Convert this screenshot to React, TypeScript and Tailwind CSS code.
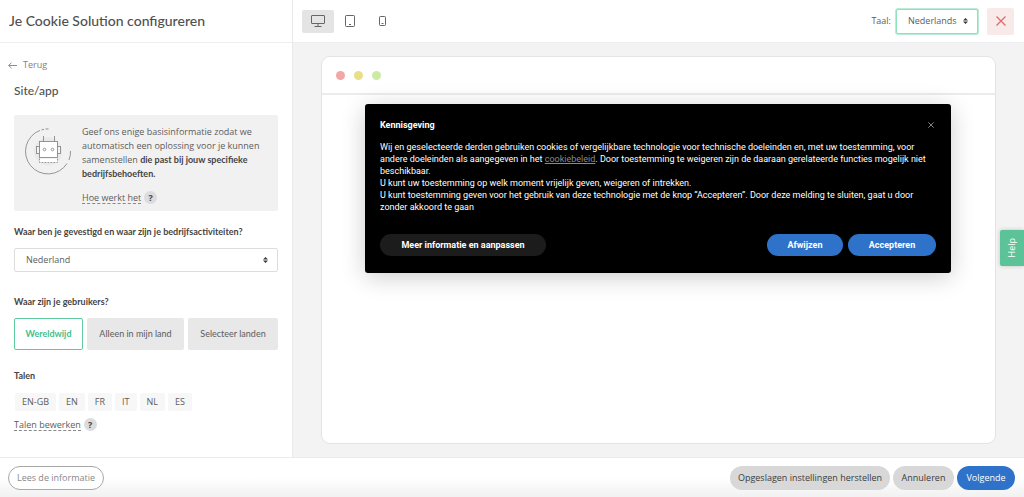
import React, { useState } from 'react';
import { clsx } from 'clsx';

const AUDIENCES = [
  { id: 'world', label: 'Wereldwijd', width: 'w-[69px]' },
  { id: 'country', label: 'Alleen in mijn land', width: 'w-[97px]' },
  { id: 'select', label: 'Selecteer landen', width: 'flex-1' },
];

const LANGUAGES = ['EN-GB', 'EN', 'FR', 'IT', 'NL', 'ES'];

const DEVICES = [
  { id: 'desktop', label: 'Desktop', icon: <DesktopIcon /> },
  { id: 'tablet', label: 'Tablet', icon: <TabletIcon /> },
  { id: 'phone', label: 'Telefoon', icon: <PhoneIcon /> },
];

function DesktopIcon() {
  return (
    <svg width="14" height="12" viewBox="0 0 14 12" fill="none" stroke="#666" strokeWidth="1">
      <rect x="0.5" y="0.5" width="13" height="8" rx="0.5" />
      <path d="M7 8.5v3M3.5 11.5h7" />
    </svg>
  );
}

function TabletIcon() {
  return (
    <svg width="10" height="12" viewBox="0 0 10 12" fill="none" stroke="#666" strokeWidth="1">
      <rect x="0.5" y="0.5" width="9" height="11" rx="0.8" />
      <path d="M4 9.5h2" />
    </svg>
  );
}

function PhoneIcon() {
  return (
    <svg width="7" height="10" viewBox="0 0 7 10" fill="none" stroke="#666" strokeWidth="1">
      <rect x="0.5" y="0.5" width="6" height="9" rx="0.8" />
      <path d="M2.5 7.5h2" />
    </svg>
  );
}

function Cross({ size, color }: { size: number; color: string }) {
  return (
    <svg width={size} height={size} viewBox="0 0 10 10" fill="none" stroke={color} strokeWidth="1.3">
      <path d="M0.5 0.5l9 9M9.5 0.5l-9 9" />
    </svg>
  );
}

function Caret() {
  return (
    <svg className="pointer-events-none absolute top-1/2 right-[10px] -translate-y-1/2" width="5" height="6" viewBox="0 0 5 6" fill="#343a40">
      <path d="M0 2.5L2.5 0L5 2.5zM0 3.5L2.5 6L5 3.5z" />
    </svg>
  );
}

function Robot() {
  return (
    <svg className="shrink-0" width="48" height="48" viewBox="0 0 48 48" fill="none" stroke="#8a8a8a" strokeWidth="0.9">
      <circle cx="24" cy="23.500" r="14" fill="#e9e9e9" stroke="none" />
      <path d="M16 2.400A22.500 22.500 0 1 0 43 35.500M45 32A22.500 22.500 0 0 0 46.500 23M17.500 1.900l2.500-.6M21.500 1l3-.1" />
      <path d="M19.500 13.500V8M30.500 13.500V8" />
      <rect x="12.500" y="18.500" width="3" height="7" fill="#f4f4f4" />
      <rect x="33.500" y="18.500" width="3" height="7" fill="#f4f4f4" />
      <rect x="15.500" y="13.500" width="18" height="16" fill="#fff" />
      <circle cx="20.500" cy="21.500" r="1.300" />
      <circle cx="28.500" cy="21.500" r="1.300" />
      <path d="M15.500 30.500v4h18v-4" fill="#fff" strokeDasharray="1.800 1.200" />
    </svg>
  );
}

function HelpLink({ children }: { children: React.ReactNode }) {
  return (
    <div className="flex items-center gap-[3px]">
      <a href="#" className="border-b border-dashed border-[#888] leading-[11px]">{children}</a>
      <button aria-label="Uitleg" className="size-[13px] rounded-full bg-[#dcdcdc] leading-[13px] font-bold text-[#444]">?</button>
    </div>
  );
}

function CookieBanner() {
  return (
    <section className="mt-[9px] mr-11 ml-[43px] rounded-[3px] bg-black px-[15px] pt-[15px] pb-[17px] font-['Roboto',sans-serif] text-[9px] leading-3 text-white shadow-[0_4px_24px_rgba(0,0,0,0.2)]">
      <div className="flex items-center justify-between">
        <h2 className="font-bold">Kennisgeving</h2>
        <button aria-label="Sluiten" className="mr-0.5">
          <Cross size={6} color="#aaa" />
        </button>
      </div>
      <div className="mt-[10px]">
        <p>
          Wij en geselecteerde derden gebruiken cookies of vergelijkbare technologie voor technische doeleinden en, met uw toestemming, voor andere doeleinden als aangegeven in het{' '}
          <a href="#" className="text-[#8a8a8a] underline">cookiebeleid</a>. Door toestemming te weigeren zijn de daaraan gerelateerde functies mogelijk niet beschikbaar.
        </p>
        <p>U kunt uw toestemming op welk moment vrijelijk geven, weigeren of intrekken.</p>
        <p>
          U kunt toestemming geven voor het gebruik van deze technologie met de knop “Accepteren”. Door deze melding te sluiten, gaat u door zonder akkoord te gaan
        </p>
      </div>
      <div className="mt-[21px] flex gap-[5px] font-bold">
        <button className="mr-auto h-[22px] w-[166px] rounded-full bg-[#1c1c1c]">Meer informatie en aanpassen</button>
        <button className="h-[22px] w-[76px] rounded-full bg-[#2f72c9]">Afwijzen</button>
        <button className="h-[22px] w-[88px] rounded-full bg-[#2f72c9]">Accepteren</button>
      </div>
    </section>
  );
}

export default function App() {
  const [audience, setAudience] = useState('world');
  const [device, setDevice] = useState('desktop');

  return (
    <div className="relative flex min-h-screen flex-col bg-white font-['Open_Sans',sans-serif] text-[9px] leading-[14px] text-[#5c5c5c]">
      <div className="flex flex-1">
        <aside className="flex w-[293px] shrink-0 flex-col border-r border-[#e9e9e9]">
          <header className="flex h-[43px] items-center border-b border-[#eee] px-[9px]">
            <h1 className="font-['Lato',sans-serif] text-[14px] font-medium text-[#505050]">Je Cookie Solution configureren</h1>
          </header>

          <div className="px-[14px] pt-[15px]">
            <a href="#" className="-ml-1.5 flex items-center gap-1.5 text-[#808080]">
              <svg width="9" height="7" viewBox="0 0 9 7" fill="none" stroke="#808080" strokeWidth="0.9">
                <path d="M9 3.500H.7M3.500.7L.7 3.500l2.800 2.800" />
              </svg>
              Terug
            </a>
            <h2 className="mt-3 font-['Lato',sans-serif] text-[12px] font-medium text-[#505050]">Site/app</h2>

            <div className="mt-[17px] flex gap-[10px] rounded-[2px] bg-[#f1f1f1] px-[10px] pt-[10px] pb-[7px]">
              <div className="pt-[3px]">
                <Robot />
              </div>
              <div>
                <p>
                  Geef ons enige basisinformatie zodat we automatisch een oplossing voor je kunnen samenstellen{' '}
                  <strong className="font-['Lato',sans-serif] text-[#444]">die past bij jouw specifieke bedrijfsbehoeften.</strong>
                </p>
                <div className="mt-[10px]">
                  <HelpLink>Hoe werkt het</HelpLink>
                </div>
              </div>
            </div>

            <label htmlFor="country" className="mt-[14px] block font-['Lato',sans-serif] font-bold text-[#444]">
              Waar ben je gevestigd en waar zijn je bedrijfsactiviteiten?
            </label>
            <div className="relative mt-[9px]">
              <select id="country" className="h-6 w-full appearance-none rounded-[2px] border border-[#ddd] bg-white px-[11px]">
                <option>Nederland</option>
              </select>
              <Caret />
            </div>

            <h3 className="mt-[23px] font-['Lato',sans-serif] font-bold text-[#444]">Waar zijn je gebruikers?</h3>
            <div className="mt-[9px] flex gap-1">
              {AUDIENCES.map((item) => (
                <button
                  key={item.id}
                  onClick={() => setAudience(item.id)}
                  className={clsx(
                    "h-8 rounded-[2px] font-['Lato',sans-serif] whitespace-nowrap",
                    item.width,
                    audience === item.id ? 'border border-[#5fcca0] bg-white font-bold text-[#45bd8c]' : 'bg-[#e8e8e8]'
                  )}
                >
                  {item.label}
                </button>
              ))}
            </div>

            <h3 className="mt-[19px] font-['Lato',sans-serif] font-bold text-[#444]">Talen</h3>
            <ul className="mt-[10px] ml-px flex gap-[3px]">
              {LANGUAGES.map((lang) => (
                <li key={lang} className="rounded-[2px] bg-[#f7f7f7] px-[7px] py-0.5">{lang}</li>
              ))}
            </ul>
            <div className="mt-[7px]">
              <HelpLink>Talen bewerken</HelpLink>
            </div>
          </div>
        </aside>

        <main className="flex min-w-0 flex-1 flex-col bg-[#f3f3f3]">
          <header className="flex h-[43px] items-center border-b border-[#eee] bg-white pr-[10px] pl-[9px]">
            <div className="flex">
              {DEVICES.map((item) => (
                <button
                  key={item.id}
                  aria-label={item.label}
                  onClick={() => setDevice(item.id)}
                  className={clsx('flex h-[23px] w-8 items-center justify-center rounded-[2px]', device === item.id && 'bg-[#e4e4e4]')}
                >
                  {item.icon}
                </button>
              ))}
            </div>
            <label htmlFor="language" className="mr-[5px] ml-auto">Taal:</label>
            <div className="relative">
              <select id="language" className="block h-[25px] w-[82px] appearance-none rounded-[2px] border border-[#8fe0bf] bg-white pl-[11px] ring-1 ring-[#b9ecd6]">
                <option>Nederlands</option>
              </select>
              <Caret />
            </div>
            <button aria-label="Sluiten" className="ml-[9px] flex size-[27px] items-center justify-center rounded-[2px] bg-[#f9eaea]">
              <Cross size={10} color="#dc6b6b" />
            </button>
          </header>

          <div className="flex flex-1 flex-col px-7 py-[13px]">
            <div className="flex-1 rounded-[9px] border border-[#e4e4e4] bg-white">
              <div className="flex h-[38px] items-center gap-[9px] border-b-2 border-[#ececec] px-[14px]">
                <span className="size-[9px] rounded-full bg-[#f3a6a6]" />
                <span className="size-[9px] rounded-full bg-[#e8df86]" />
                <span className="size-[9px] rounded-full bg-[#cdeaa4]" />
              </div>
              <CookieBanner />
            </div>
          </div>
        </main>
      </div>

      <footer className="flex h-10 items-center gap-[3px] border-t border-[#ebebeb] bg-linear-to-b from-white from-50% to-[#f1f1f1] pr-[9px] pl-2 text-[#3c3c3c]">
        <button className="mr-auto h-6 w-24 rounded-full border border-[#a8a8a8] bg-white text-[#888]">Lees de informatie</button>
        <button className="h-6 w-[160px] rounded-full bg-[#d8d8d8]">Opgeslagen instellingen herstellen</button>
        <button className="h-6 w-[61px] rounded-full bg-[#d8d8d8]">Annuleren</button>
        <button className="h-6 w-[58px] rounded-full bg-[#2f72c9] text-white">Volgende</button>
      </footer>

      <button className="absolute top-[230px] right-0 flex h-9 w-6 items-center justify-center rounded-l-[2px] bg-[#5cc297] text-white shadow-[0_0_4px_rgba(0,0,0,0.2)]">
        <span className="rotate-180 [writing-mode:vertical-rl]">Help</span>
      </button>
    </div>
  );
}
